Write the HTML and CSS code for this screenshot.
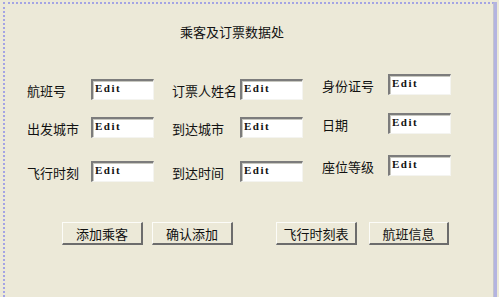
FILE: index.html
```html
<!DOCTYPE html>
<html lang="zh-CN">
<head>
    <meta charset="UTF-8">
    <title>乘客及订票数据处</title>
    <link rel="stylesheet" href="styles.css">
</head>
<body>
    <div class="frame">
        <h1 class="title">乘客及订票数据处</h1>

        <div class="form">
            <div class="col col1">
                <div class="field"><label>航班号</label><input class="edit" value="Edit"></div>
                <div class="field"><label>出发城市</label><input class="edit" value="Edit"></div>
                <div class="field late"><label>飞行时刻</label><input class="edit" value="Edit"></div>
            </div>
            <div class="col col2">
                <div class="field"><label>订票人姓名</label><input class="edit" value="Edit"></div>
                <div class="field"><label>到达城市</label><input class="edit" value="Edit"></div>
                <div class="field late"><label>到达时间</label><input class="edit" value="Edit"></div>
            </div>
            <div class="col col3">
                <div class="field"><label>身份证号</label><input class="edit" value="Edit"></div>
                <div class="field"><label>日期</label><input class="edit" value="Edit"></div>
                <div class="field late"><label>座位等级</label><input class="edit" value="Edit"></div>
            </div>
        </div>

        <div class="buttons">
            <button>添加乘客</button>
            <button>确认添加</button>
            <button class="second">飞行时刻表</button>
            <button class="last">航班信息</button>
        </div>
    </div>
</body>
</html>
```

FILE: styles.css
```css
body {
    background-color: #ece9d8;
    color: #111;
    font-family: "Noto Sans CJK SC", "Noto Sans", sans-serif;
    font-size: 13px;
    margin: 0;
    padding: 0;
}

.frame {
    margin: 2px 5px 0 3px;
    height: 295px;
    box-sizing: border-box;
    border-top: 2px dotted #a4a4e4;
    border-left: 2px dotted #a4a4e4;
    border-right: 1px solid #c4c4cc;
    box-shadow: 3px 0 0 #b4b4e0;
}

.title {
    font-size: 13px;
    font-weight: normal;
    line-height: 16px;
    margin: 20px 0 0 175px;
}

.form {
    display: flex;
    align-items: flex-start;
    margin-top: 34px;
    padding-left: 22px;
}

.col {
    display: flex;
    flex-direction: column;
}

.col1, .col2 {
    padding-top: 5px;
}

.col2 {
    margin-left: 18px;
}

.col3 {
    margin-left: 19px;
}

.field {
    display: flex;
    align-items: center;
    height: 21px;
}

.field + .field {
    margin-top: 17px;
}

.field.late {
    margin-top: 23px;
}

.col3 .field + .field {
    margin-top: 18px;
}

.col3 .field.late {
    margin-top: 21px;
}

.field label {
    padding-top: 3px;
    line-height: 16px;
}

.col1 label {
    width: 64px;
}

.col2 label {
    width: 68px;
}

.col3 label {
    width: 66px;
}

.edit {
    width: 63px;
    height: 21px;
    box-sizing: border-box;
    margin: 0;
    padding: 0 0 5px 2px;
    background-color: #fff;
    border-style: solid;
    border-width: 2px 1px 1px 2px;
    border-color: #7c7c7c #f4f4f0 #f4f4f0 #7c7c7c;
    box-shadow: inset 1px 1px 0 #c8c8c0;
    font-family: "Liberation Serif", serif;
    font-weight: bold;
    font-size: 11px;
    letter-spacing: 1.5px;
    color: #111;
    outline: none;
}

.buttons {
    display: flex;
    margin-top: 40px;
    padding-left: 57px;
}

button {
    width: 81px;
    height: 23px;
    margin: 0 9px 0 0;
    padding: 0;
    background-color: #ece9d8;
    border-style: solid;
    border-width: 1px 2px 2px 1px;
    border-color: #fcfcf8 #6c6c6c #6c6c6c #fcfcf8;
    font-family: "Noto Sans CJK SC", sans-serif;
    font-size: 13px;
    color: #111;
    cursor: pointer;
}

button.second {
    margin-left: 34px;
    margin-right: 12px;
}

button.last {
    width: 80px;
}
```
